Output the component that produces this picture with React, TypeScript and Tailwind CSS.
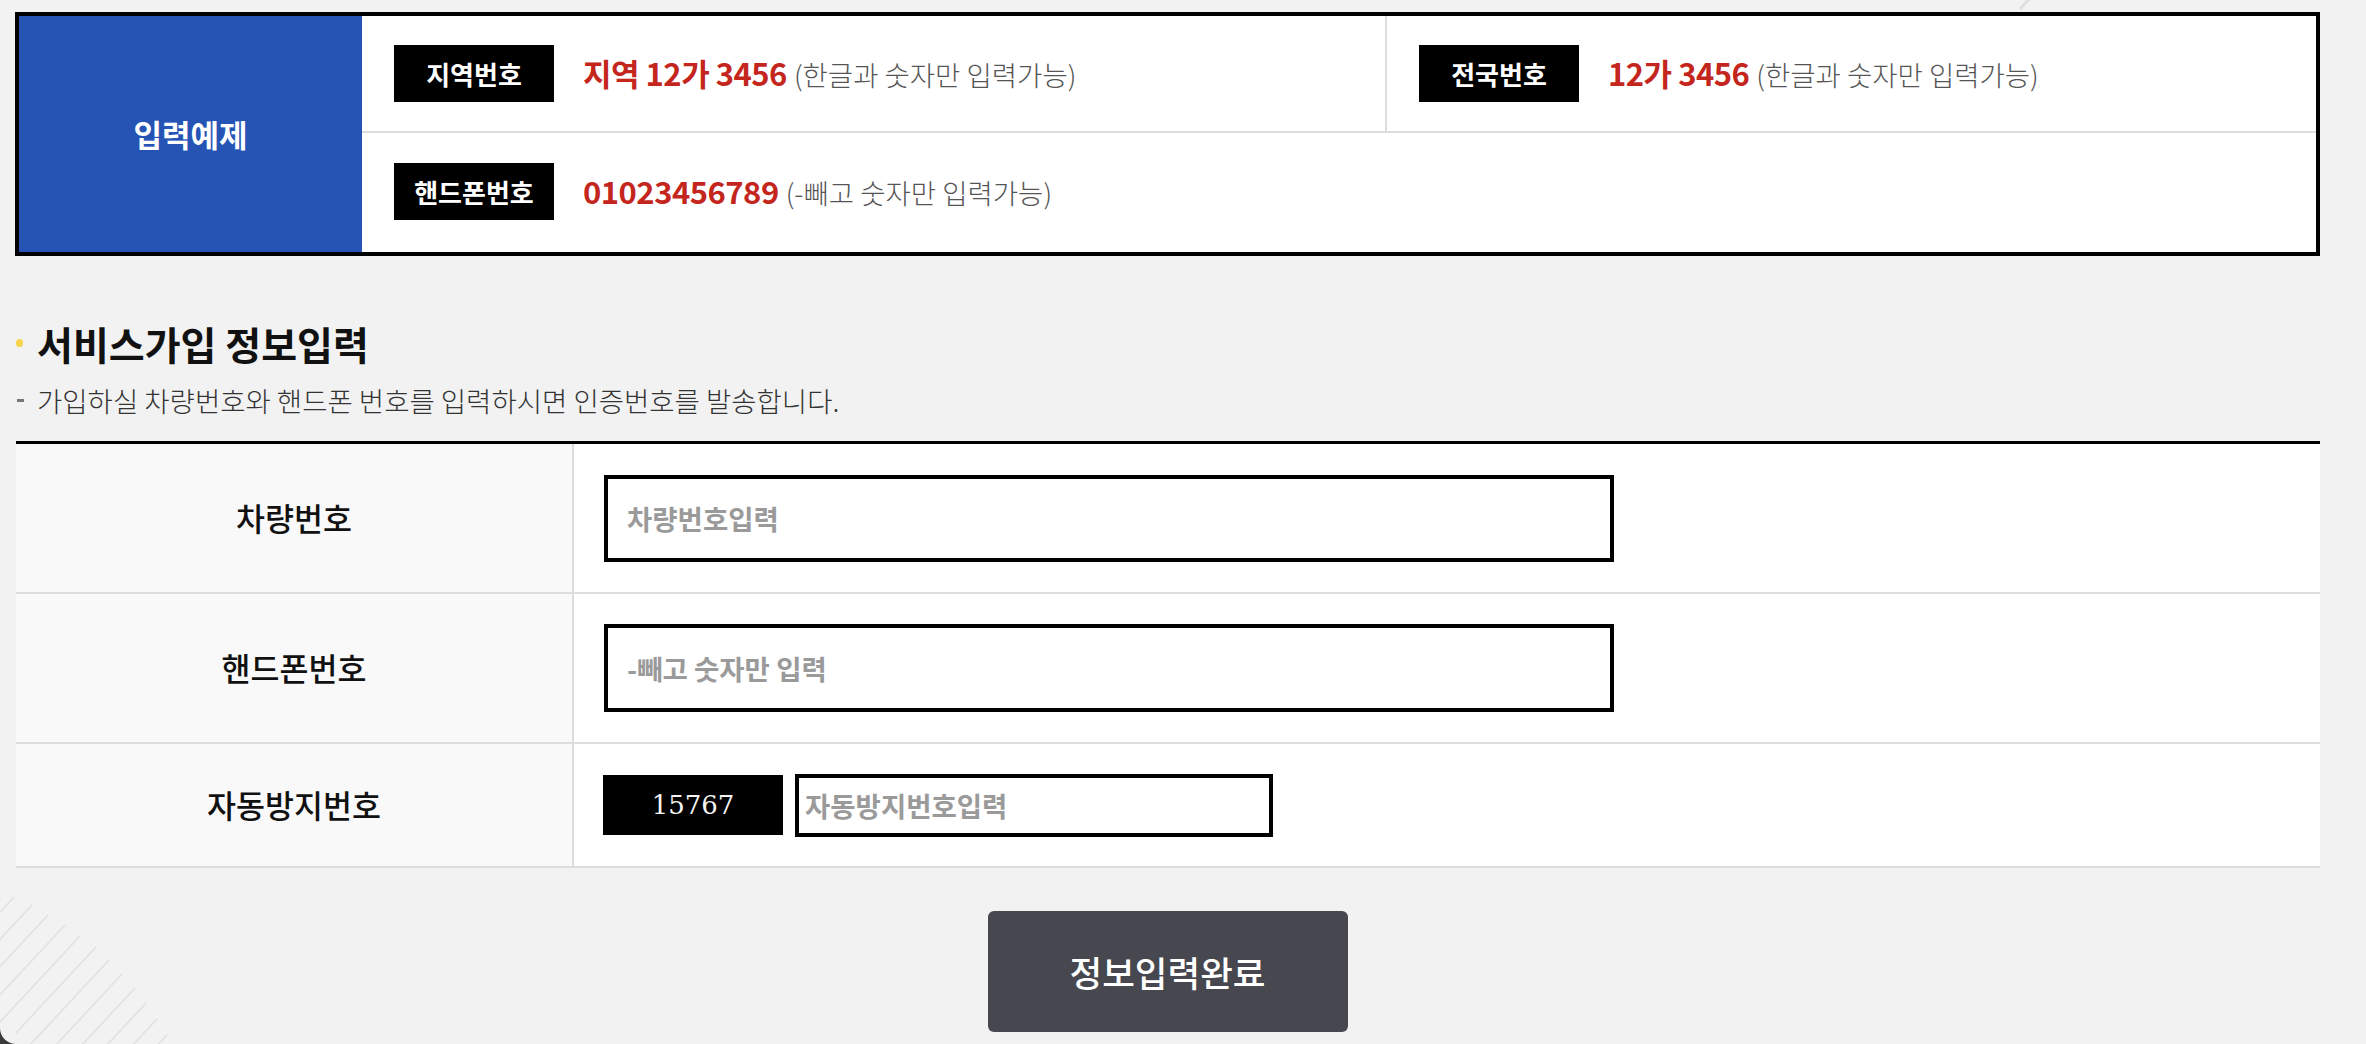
import React from "react";

function Tag({ children }: { children: React.ReactNode }) {
  return (
    <div className="flex h-[57px] w-[160px] shrink-0 items-center justify-center bg-black text-[26px] font-bold leading-none text-white">
      {children}
    </div>
  );
}

function Example({ label, red, gray }: { label: string; red: string; gray: string }) {
  return (
    <div className="flex h-full items-center pl-[32px]">
      <Tag>{label}</Tag>
      <div className="ml-[29px] flex items-baseline whitespace-nowrap">
        <span className="text-[31px] font-bold tracking-[-0.5px] text-[#c4261d]">{red}</span>
        <span className="ml-[7px] text-[27.5px] font-light text-[#555]">{gray}</span>
      </div>
    </div>
  );
}

function Stripes() {
  const ends: [number, number][] = [
    [14, 897], [32, 905], [48, 915], [65, 925], [80, 936], [96, 947],
    [109, 960], [122, 974], [135, 988], [146, 1003], [157, 1019], [167, 1035], [176, 1050],
  ];
  return (
    <svg className="pointer-events-none absolute bottom-0 left-0" width="200" height="164" viewBox="0 880 200 164">
      {ends.map(([x, y], i) => (
        <line key={i} x1={x} y1={y} x2={x - 200} y2={y + 215} stroke="#e1e1e1" strokeWidth="1.6" />
      ))}
    </svg>
  );
}

export default function App() {
  return (
    <div className="relative h-[1044px] w-[2366px] overflow-hidden bg-[#f2f2f2] font-['Noto_Sans_CJK_KR','Noto_Sans',sans-serif] text-[#111]">
      <Stripes />
      <svg className="pointer-events-none absolute left-[2010px] top-0" width="30" height="12">
        <line x1="10" y1="9" x2="20" y2="-2" stroke="#dedede" strokeWidth="3" />
      </svg>
      <div className="pointer-events-none absolute bottom-0 left-0 h-[16px] w-[16px] bg-[#3a3a3a]">
        <div className="h-full w-full rounded-bl-[16px] bg-[#f2f2f2]" />
      </div>

      <div className="relative ml-[15px] w-[2305px] pt-[12px]">
        {/* example box */}
        <div className="flex h-[244px] border-[4px] border-black bg-white">
          <div className="flex w-[343px] shrink-0 items-center justify-center bg-[#2654b5] text-[31px] font-bold text-white">
            입력예제
          </div>
          <div className="flex flex-1 flex-col">
            <div className="flex h-[117px] border-b-[2px] border-[#dddddd]">
              <div className="w-[1023px] shrink-0">
                <Example label="지역번호" red="지역 12가 3456" gray="(한글과 숫자만 입력가능)" />
              </div>
              <div className="flex-1 border-l-[2px] border-[#dddddd]">
                <Example label="전국번호" red="12가 3456" gray="(한글과 숫자만 입력가능)" />
              </div>
            </div>
            <div className="h-[117px]">
              <Example label="핸드폰번호" red="01023456789" gray="(-빼고 숫자만 입력가능)" />
            </div>
          </div>
        </div>

        {/* heading */}
        <div className="mt-[63px] flex items-center">
          <span className="ml-[1px] h-[8px] w-[7px] rounded-full bg-[#f8d44c]" />
          <h2 className="ml-[14px] text-[39px] font-bold leading-[48px] text-[#111]">서비스가입 정보입력</h2>
        </div>
        <div className="mt-[17px] flex items-center">
          <span className="ml-[2px] h-[3px] w-[7px] bg-[#777]" />
          <p className="ml-[13px] text-[27.5px] font-light leading-[32px] text-[#333]">
            가입하실 차량번호와 핸드폰 번호를 입력하시면 인증번호를 발송합니다.
          </p>
        </div>

        {/* form table */}
        <div className="mt-[25px] ml-[1px] border-t-[3px] border-black bg-white">
          <div className="flex h-[150px] border-b-[2px] border-[#dddddd]">
            <div className="flex w-[558px] shrink-0 items-center justify-center border-r-[2px] border-[#dddddd] bg-[#f9f9f9] text-[31.5px] font-medium text-[#111]">
              차량번호
            </div>
            <div className="flex flex-1 items-center pl-[30px]">
              <input
                className="h-[87px] w-[1010px] border-[4px] border-black bg-white px-[19px] text-[27.5px] font-semibold text-[#333] outline-none placeholder:text-[#9a9a9a]"
                placeholder="차량번호입력"
              />
            </div>
          </div>
          <div className="flex h-[150px] border-b-[2px] border-[#dddddd]">
            <div className="flex w-[558px] shrink-0 items-center justify-center border-r-[2px] border-[#dddddd] bg-[#f9f9f9] text-[31.5px] font-medium text-[#111]">
              핸드폰번호
            </div>
            <div className="flex flex-1 items-center pl-[30px]">
              <input
                className="h-[88px] w-[1010px] border-[4px] border-black bg-white px-[19px] text-[27.5px] font-semibold text-[#333] outline-none placeholder:text-[#9a9a9a]"
                placeholder="-빼고 숫자만 입력"
              />
            </div>
          </div>
          <div className="flex h-[124px] border-b-[2px] border-[#dddddd]">
            <div className="flex w-[558px] shrink-0 items-center justify-center border-r-[2px] border-[#dddddd] bg-[#f9f9f9] text-[31.5px] font-medium text-[#111]">
              자동방지번호
            </div>
            <div className="flex flex-1 items-center pl-[29px]">
              <div className="flex h-[60px] w-[180px] items-center justify-center bg-black font-['DejaVu_Serif',serif] text-[26px] leading-none text-[#f4f4f4]">
                15767
              </div>
              <input
                className="ml-[12px] h-[63px] w-[478px] border-[4px] border-black bg-white px-[6px] text-[27.5px] font-semibold text-[#333] outline-none placeholder:text-[#9a9a9a]"
                placeholder="자동방지번호입력"
              />
            </div>
          </div>
        </div>

        {/* submit */}
        <div className="mt-[43px] flex justify-center">
          <button className="flex h-[121px] w-[360px] items-center justify-center rounded-[6px] bg-[#47474f] text-[35.5px] font-medium text-white">
            정보입력완료
          </button>
        </div>
      </div>
    </div>
  );
}
